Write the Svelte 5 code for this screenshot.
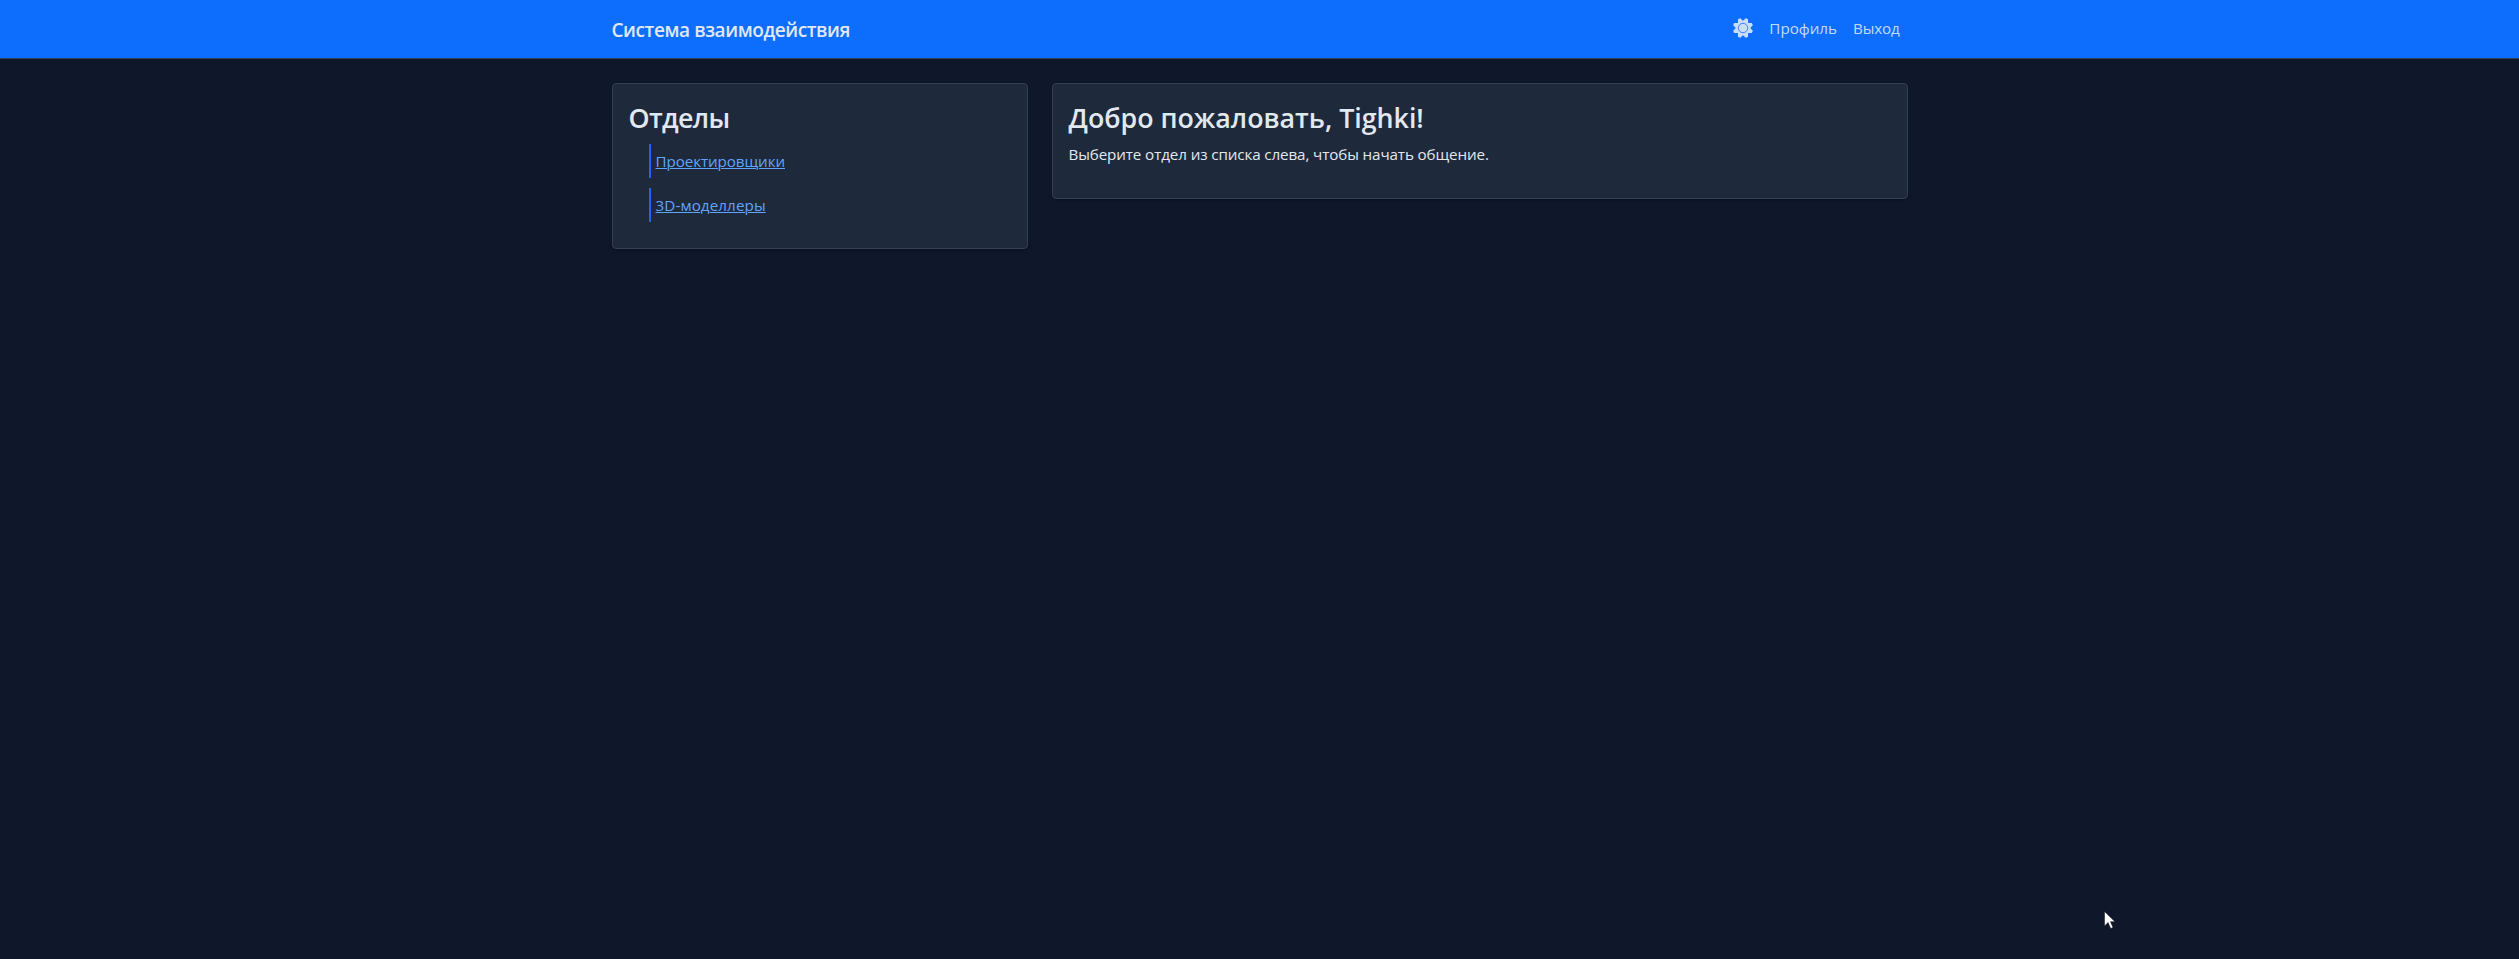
<script>
  const departments = [
    { name: 'Проектировщики', spacing: -0.08 },
    { name: '3D-моделлеры', spacing: 0.1 },
  ];

  // Eight-toothed gear outline centred on the origin
  const gear = Array.from({ length: 8 }, (_, i) =>
    [[0, 7.2], [16, 10.2], [29, 10.2], [45, 7.2]].map(([deg, r]) => {
      const a = ((i * 45 + deg) * Math.PI) / 180;
      return `${(r * Math.sin(a)).toFixed(2)},${(-r * Math.cos(a)).toFixed(2)}`;
    }).join(' ')
  ).join(' ');
</script>

<nav class="navbar">
  <div class="container bar">
    <a class="brand" href="#home">Система взаимодействия</a>
    <div class="links">
      <a class="link icon" href="#settings" aria-label="Настройки">
        <svg width="22" height="22" viewBox="-11 -11 22 22">
          <polygon points={gear} fill="#cbdcf6" />
          <circle r="4.7" fill="none" stroke="#3b86fb" stroke-width="1" />
        </svg>
      </a>
      <a class="link" href="#profile">Профиль</a>
      <a class="link logout" href="#logout">Выход</a>
    </div>
  </div>
</nav>

<main class="container grid">
  <section class="card">
    <h3 class="short">Отделы</h3>
    <ul>
      {#each departments as d}
        <li><a href="#department" style="letter-spacing: {d.spacing}px">{d.name}</a></li>
      {/each}
    </ul>
  </section>
  <section class="card">
    <h3>Добро пожаловать, Tighki!</h3>
    <p>Выберите отдел из списка слева, чтобы начать общение.</p>
  </section>
</main>

<svg class="cursor" width="13" height="20" viewBox="0 0 13 20">
  <path d="M.5.5V15L4 11.5L6.7 17.5L9 16.5L6.5 10.7H11Z" fill="#fff" stroke="#10131c" stroke-width=".5" />
</svg>

<style>
  :global(body) {
    margin: 0;
    min-height: 100vh;
    background: #0f172a;
    color: #e2e8f0;
    font: 15.2px/24px "Segoe UI", "Open Sans", sans-serif;
  }
  .container {
    box-sizing: border-box;
    width: 1320px;
    margin: 0 auto;
    padding: 0 12px;
  }
  .navbar {
    height: 58px;
    background: #0d6efd;
    border-bottom: 1px solid #334155;
  }
  .bar {
    display: flex;
    justify-content: space-between;
    height: 58px;
  }
  .brand {
    padding-top: 15px;
    color: #e2e8f0;
    font-size: 19px;
    line-height: 30px;
    font-weight: 600;
    letter-spacing: -0.42px;
    text-decoration: none;
  }
  .links {
    display: flex;
    padding-top: 8px;
  }
  .link {
    padding: 8px;
    color: #c6daf8;
    text-decoration: none;
  }
  .icon {
    padding: 9px 7px 9px 0;
    line-height: 0;
  }
  .logout { letter-spacing: -0.16px; }
  .grid {
    display: grid;
    grid-template-columns: 416px 1fr;
    gap: 24px;
    align-items: start;
    padding-top: 24px;
  }
  .card {
    padding: 16px;
    background: #1e293b;
    border: 1px solid #334155;
    border-radius: 4px;
    box-shadow: 0 1px 3px rgba(0, 0, 0, 0.3);
  }
  h3 {
    margin: 0;
    padding: 1px 0 7px;
    font-size: 26.8px;
    line-height: 33.6px;
    font-weight: 600;
    letter-spacing: -0.02px;
  }
  .short { letter-spacing: -0.65px; }
  p {
    margin: 0 0 16px;
    letter-spacing: -0.11px;
  }
  ul {
    display: grid;
    gap: 10px;
    margin: 0;
    padding: 2px 0 10px 20.5px;
    list-style: none;
  }
  li {
    padding: 5px 4.5px;
    border-left: 2px solid #2563eb;
  }
  li a {
    color: #60a5fa;
    text-underline-offset: 1px;
    text-decoration-thickness: 1px;
  }
  .cursor {
    position: absolute;
    left: 2104px;
    top: 911px;
  }
</style>
